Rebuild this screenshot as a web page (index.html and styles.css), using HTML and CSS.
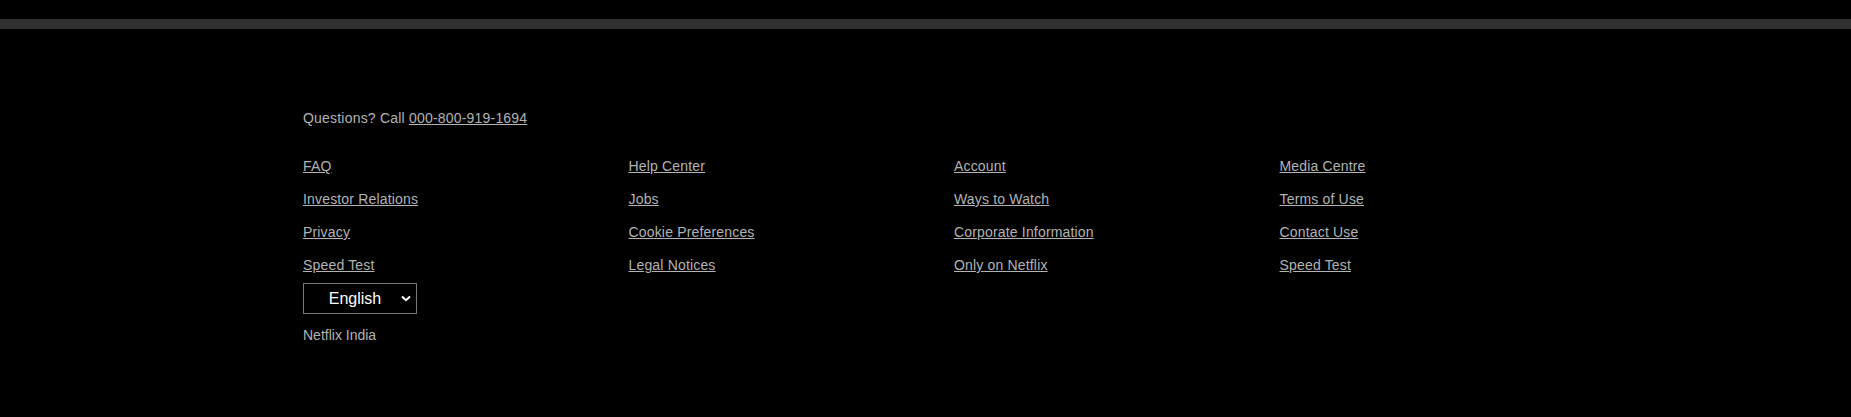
FILE: index.html
```html
<!DOCTYPE html>
<html lang="en">
<head>
    <meta charset="UTF-8">
    <meta name="viewport" content="width=device-width, initial-scale=1.0">
    <title>Netflix India</title>
    <link rel="stylesheet" href="styles.css">
</head>
<body>
    <div class="divider"></div>
    <footer class="footer">
        <p class="questions">Questions? Call <a href="#">000-800-919-1694</a></p>
        <ul class="footer-links">
            <li><a href="#">FAQ</a></li>
            <li><a href="#">Help Center</a></li>
            <li><a href="#">Account</a></li>
            <li><a href="#">Media Centre</a></li>
            <li><a href="#">Investor Relations</a></li>
            <li><a href="#">Jobs</a></li>
            <li><a href="#">Ways to Watch</a></li>
            <li><a href="#">Terms of Use</a></li>
            <li><a href="#">Privacy</a></li>
            <li><a href="#">Cookie Preferences</a></li>
            <li><a href="#">Corporate Information</a></li>
            <li><a href="#">Contact Use</a></li>
            <li><a href="#">Speed Test</a></li>
            <li><a href="#">Legal Notices</a></li>
            <li><a href="#">Only on Netflix</a></li>
            <li><a href="#">Speed Test</a></li>
        </ul>
        <div class="language">
            <select>
                <option>English</option>
                <option>हिन्दी</option>
            </select>
            <!-- chevron drawn over the select -->
            <svg class="chevron" width="10" height="7" viewBox="0 0 10 7">
                <path d="M1 1.5 L5 5.2 L9 1.5" fill="none" stroke="#ffffff" stroke-width="2"/>
            </svg>
        </div>
        <p class="country">Netflix India</p>
    </footer>
</body>
</html>
```

FILE: styles.css
```css
body {
    margin: 0;
    background-color: #000000;
    color: #b3b3b3;
    font-family: "Liberation Sans", Arial, sans-serif;
    min-height: 100vh;
}
.divider {
    margin-top: 19px;
    height: 10px;
    background-color: #303030;
}
.footer {
    padding: 81px 0 0 303px;
    font-size: 14px;
    line-height: 16px;
}
.footer a {
    color: #b3b3b3;
    text-decoration: underline;
}
.questions {
    margin: 0 0 32px;
    letter-spacing: 0.2px;
}
.footer-links {
    list-style: none;
    margin: 0;
    padding: 0;
    width: 1302px;
    display: grid;
    grid-template-columns: repeat(4, 1fr);
    row-gap: 17px;
    letter-spacing: 0.17px;
}
.language {
    position: relative;
    width: 112px;
    height: 29px;
    margin-top: 10px;
    border: 1px solid #777777;
}
.language select {
    appearance: none;
    -webkit-appearance: none;
    width: 100%;
    height: 100%;
    padding: 0 10px 0 0;
    border: 0;
    background: transparent;
    color: #ffffff;
    font-family: "Liberation Sans", Arial, sans-serif;
    font-size: 16px;
    text-align: center;
    text-align-last: center;
    outline: none;
}
.language option {
    background-color: #000000;
}
.chevron {
    position: absolute;
    right: 5px;
    top: 11px;
    pointer-events: none;
}
.country {
    margin: 13px 0 0;
}
```
